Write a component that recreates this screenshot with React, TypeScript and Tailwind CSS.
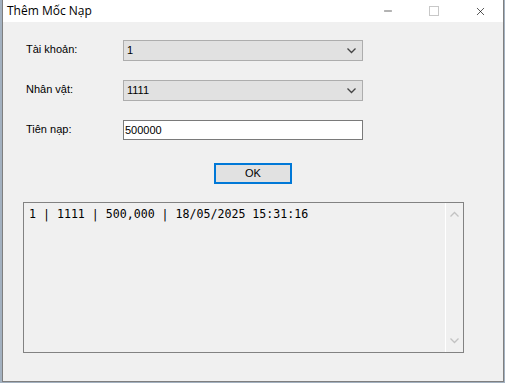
import { Minus, X } from 'lucide-react'

function Chevron({ up = false, className = '' }: { up?: boolean; className?: string }) {
  return (
    <svg width="9" height="6" viewBox="0 0 9 6" className={className}>
      <path
        d={up ? 'M0.5 5.5 L4.5 1.5 L8.5 5.5' : 'M0.5 0.5 L4.5 4.5 L8.5 0.5'}
        fill="none"
        stroke="currentColor"
        strokeWidth="1.3"
      />
    </svg>
  )
}

function Combo({ value }: { value: string }) {
  return (
    <div className="w-[240px] h-[21px] bg-[#e1e1e1] border border-[#adadad] flex items-center justify-between pl-[3px] pr-[6px] text-[11px] text-black">
      <span>{value}</span>
      <Chevron className="text-[#444]" />
    </div>
  )
}

function Row({ label, children }: { label: string; children: React.ReactNode }) {
  return (
    <div className="flex items-center">
      <span className="w-[97px] text-[11px] text-black -mt-[2px]">{label}</span>
      {children}
    </div>
  )
}

export default function App() {
  return (
    <div className="w-[505px] h-[383px] bg-[#a3b1c0] pl-[2px] overflow-hidden" style={{ fontFamily: '"Liberation Sans", Arial, sans-serif' }}>
      <div className="w-[502px] h-[382px] border-l border-r border-b border-[#7f7f7f] flex flex-col">
        {/* title bar */}
        <div className="h-[22px] bg-white flex items-center shrink-0">
          <span className="pl-[4px] text-[12px] text-black" style={{ fontFamily: '"Open Sans", "Noto Sans", sans-serif' }}>
            Thêm Mốc Nạp
          </span>
          <div className="ml-auto flex items-center h-full">
            <div className="w-[46px] flex justify-center">
              <Minus size={12} strokeWidth={1.2} className="text-black" />
            </div>
            <div className="w-[46px] flex justify-center">
              <div className="w-[10px] h-[10px] border border-[#c8c8c8]" />
            </div>
            <div className="w-[46px] flex justify-center">
              <X size={13} strokeWidth={1.2} className="text-black" />
            </div>
          </div>
        </div>

        {/* body */}
        <div className="flex-1 bg-[#f0f0f0] flex flex-col">
          <div className="pl-[23px] pt-[18px] flex flex-col gap-[19px]">
            <Row label="Tài khoản:">
              <Combo value="1" />
            </Row>
            <Row label="Nhân vật:">
              <Combo value="1111" />
            </Row>
            <Row label="Tiên nạp:">
              <div className="w-[240px] h-[20px] bg-white border border-[#7a7a7a] flex items-center pl-[1px] text-[11px] text-black">
                500000
              </div>
            </Row>
          </div>

          <div className="pl-[211px] pt-[23px]">
            <button className="w-[78px] h-[21px] bg-[#e1e1e1] border-2 border-[#0078d7] text-[11px] text-black flex items-center justify-center">
              OK
            </button>
          </div>

          <div className="ml-[20px] mt-[18px] w-[441px] h-[151px] border border-[#828282] flex">
            <div
              className="flex-1 pl-[5px] pt-[3px] text-[11.6px] text-black"
              style={{ fontFamily: '"DejaVu Sans Mono", "Liberation Mono", monospace' }}
            >
              1 | 1111 | 500,000 | 18/05/2025 15:31:16
            </div>
            <div className="w-[18px] border-l border-white flex flex-col items-center justify-between py-[8px] text-[#c2c2c2]">
              <Chevron up />
              <Chevron />
            </div>
          </div>
        </div>
      </div>
    </div>
  )
}
